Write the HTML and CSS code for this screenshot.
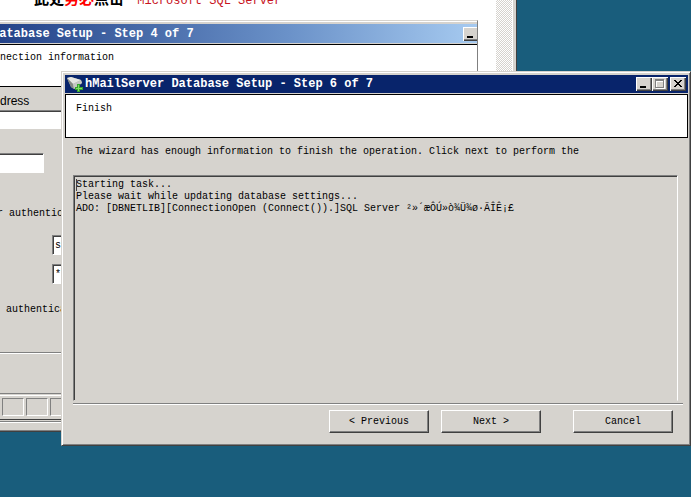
FILE: index.html
```
<!DOCTYPE html>
<html lang="en">
<head>
<meta charset="UTF-8" />
<meta name="viewport" content="width=device-width, initial-scale=1" />
<title>hMailServer Database Setup</title>
<link rel="stylesheet" href="styles.css">
</head>
<body>

<main class="desktop">

  <!-- Document viewer behind the dialog -->
  <section class="viewer">
    <div class="viewer-body">
      <div class="page">
        <p class="note"><b>此处<em>务必</em>点击</b> <span>Microsoft SQL Server</span></p>
        <div class="shot">
          <div class="shot-title">
            <h2>Database Setup - Step 4 of 7</h2>
            <button class="win-btn" aria-label="Minimize"><svg viewBox="0 0 16 14"><path d="M4 9h6v2H4z" /></svg></button>
          </div>
          <div class="shot-header">nection information</div>
          <label class="address" for="address">dress</label>
          <input class="address-field" id="address" type="text" />
          <form class="login">
            <input class="server" type="text" aria-label="Server address" />
            <p>r authentication</p>
            <input class="account" type="text" value="sa" aria-label="User name" />
            <input class="account" type="text" value="****" aria-label="Password" />
            <p>authentication</p>
          </form>
          <hr />
        </div>
      </div>
      <div class="scrollbar"></div>
    </div>
    <div class="status">
      <span></span><span></span><span></span>
    </div>
    <div class="viewer-edge"></div>
  </section>

  <!-- Setup wizard -->
  <section class="dialog">
    <header class="titlebar">
      <svg class="app-icon" viewBox="0 0 16 16">
        <path d="M0 2L4 1L14 4L15 7L7 13L4 11Z" fill="#a9aba8" />
        <path d="M0 2L4 1L14 4L6 8Z" fill="#e4e5e2" />
        <path d="M0 2L6 8L7 13L4 11Z" fill="#858985" />
        <path d="M6 8L14 4L15 7L7 13Z" fill="#c5c7c3" />
        <path d="M10 8h3v3h3v3h-3v2h-3v-2H8v-3h2z" fill="#35a52d" />
        <path d="M11 9h1v3h3v1h-3v2h-1v-2H9v-1h2z" fill="#80dc63" />
      </svg>
      <h1>hMailServer Database Setup - Step 6 of 7</h1>
      <div class="win-btns">
        <button class="win-btn" aria-label="Minimize"><svg viewBox="0 0 16 14"><path d="M4 9h6v2H4z" /></svg></button>
        <button class="win-btn" aria-label="Maximize" disabled><svg viewBox="0 0 16 14"><path d="M4 3h9v9H4zM5 5v6h7V5z" fill="#fff" fill-rule="evenodd" /><path d="M3 2h9v9H3zM4 4v6h7V4z" fill="#808080" fill-rule="evenodd" /></svg></button>
        <button class="win-btn close" aria-label="Close"><svg viewBox="0 0 16 14"><path d="M4 3h2v1h1v1h2V4h1V3h2v1h-1v1h-1v1H9v1h1v1h1v1h1v1h-2V9H9V8H7v1H6v1H4V9h1V8h1V7h1V6H6V5H5V4H4z" /></svg></button>
      </div>
    </header>

    <div class="step">Finish</div>

    <div class="content">
      <label for="log">The wizard has enough information to finish the operation. Click next to perform the</label>
      <div class="log-box">
        <textarea id="log" readonly>Starting task...
Please wait while updating database settings...
ADO: [DBNETLIB][ConnectionOpen (Connect()).]SQL Server ²»´æÔÚ»ò¾Ü¾ø·ÃÎÊ¡£</textarea>
        <span class="caret"></span>
      </div>
      <hr />
    </div>

    <footer class="actions">
      <button>&lt; Previous</button>
      <button>Next &gt;</button>
      <button class="cancel">Cancel</button>
    </footer>
  </section>

</main>

</body>
</html>
```
FILE: styles.css
```
* {
  margin: 0; padding: 0; box-sizing: border-box;
}
html, body {
  height: 100%;
}
body, button, input, textarea {
  font-family: "Liberation Mono", "Noto Sans CJK SC", monospace;
  font-size: 10px;
  line-height: 12px;
  color: #000;
}

.desktop {
  position: relative;
  height: 100%;
  overflow: hidden;
  background: #195d7c;
  border-right: 1px solid #fff;
}

hr {
  border: none;
  border-top: 1px solid #808080;
  border-bottom: 1px solid #fff;
}

/* Document viewer */
.viewer {
  position: absolute;
  left: 0; top: 0;
  width: 517px;
  background: #d6d3ce;
  border-right: 1px solid #404040;
  border-bottom: 1px solid #404040;
}
.viewer-body {
  display: flex;
  height: 393px;
  padding-right: 3px;
}
.page {
  flex: 1;
  background: #fff;
  padding-right: 18px;
}
.note {
  height: 23px;
  margin-top: -3px;
  overflow: hidden;
  padding-left: 34px;
  font-size: 12px;
  line-height: 2px;
  white-space: nowrap;
}
.note b {
  font-family: "Noto Sans CJK SC", sans-serif;
  font-size: 15px;
  margin-right: 6px;
}
.note em {
  font-style: normal;
  color: #f00;
}
.note span {
  color: #c8141e;
}
.scrollbar {
  width: 17px;
  background: repeating-conic-gradient(#d6d3ce 0 25%, #fff 0 50%) 0 0 / 2px 2px;
  border-right: 1px solid #fff;
}

.shot {
  height: 373px;
  display: flex;
  flex-direction: column;
  background: #d6d3ce;
  border-top: 1px solid #d6d3ce;
  border-right: 1px solid #808080;
}
.shot-title {
  display: flex;
  align-items: center;
  justify-content: space-between;
  height: 23px;
  border-top: 1px solid #fff;
  border-bottom: 1px solid #d6d3ce;
  background: linear-gradient(to right, #244389, #6a91c8 60%, #a6caf0);
  box-shadow: inset 0 2px #d6d3ce;
  padding-top: 2px;
  overflow: hidden;
}
.shot-title h2 {
  font-size: 12px;
  line-height: 18px;
  color: #fff;
  margin-left: -8px;
}
.shot-title .win-btn {
  margin-right: -2px;
}
.shot-header {
  height: 43px;
  padding-top: 7px;
  background: #fff;
  border-top: 1px solid #000;
  border-bottom: 1px solid #000;
}
.address {
  font-family: "Liberation Sans", sans-serif;
  font-size: 12px;
  line-height: 28px;
  height: 23px;
}
input {
  background: #fff;
  border: 1px solid #fff;
  border-top-color: #808080;
  border-left-color: #808080;
  box-shadow: inset 1px 1px #404040;
}
.address-field {
  width: 100%;
  height: 19px;
  border-left: none;
  box-shadow: inset 0 1px #404040;
}
.login {
  flex: 1;
  padding-top: 24px;
}
.login input {
  display: block;
}
.login p {
  margin-left: 6px;
}
.login .server {
  width: 44px;
  height: 20px;
  border-left: none;
  box-shadow: inset 0 1px #404040;
}
.server + p {
  margin-top: 35px;
  margin-bottom: 15px;
  margin-left: -3px;
}
.login .account {
  width: 160px;
  height: 20px;
  margin-left: 52px;
  margin-bottom: 9px;
  padding-left: 2px;
}
.account + p {
  margin-top: 20px;
}
.shot hr {
  margin-bottom: 39px;
}

/* Status bar */
.status {
  display: flex;
  gap: 2px;
  height: 26px;
  padding: 3px 2px;
  border-top: 1px solid #808080;
  box-shadow: inset 0 1px #d6d3ce, inset 0 2px #fff;
}
.status span {
  width: 22px;
  height: 18px;
  margin-top: 1px;
  border: 1px solid #fff;
  border-top-color: #808080;
  border-left-color: #808080;
}
.viewer-edge {
  height: 12px;
  border-top: 1px solid #404040;
  border-bottom: 1px solid #808080;
  background: linear-gradient(#d6d3ce 1px, #808080 1px 2px, #fff 2px 3px, #d6d3ce 3px);
}

/* Wizard dialog */
.dialog {
  position: absolute;
  left: 61px; right: 0; top: 71px;
  padding: 2px;
  background: #d6d3ce;
  border: 1px solid #404040;
  border-top-color: #d6d3ce;
  border-left-color: #d6d3ce;
  box-shadow: inset 1px 1px #fff, inset -1px -1px #808080;
}
.titlebar {
  display: flex;
  align-items: center;
  height: 18px;
  margin: 1px 0 1px 1px;
  padding: 0 2px;
  background: #08246b;
}
.titlebar h1 {
  flex: 1;
  font-size: 12px;
  line-height: 18px;
  color: #fff;
  margin-left: 2px;
}
.app-icon {
  width: 16px;
  height: 16px;
}
.win-btns {
  display: flex;
}
.win-btn {
  width: 16px;
  height: 14px;
  background: #d6d3ce;
  border: none;
  box-shadow: inset 1px 1px #fff, inset -1px -1px #404040, inset -2px -2px #808080;
}
.win-btn svg {
  display: block;
  width: 16px;
  height: 14px;
}
.win-btn.close {
  margin-left: 2px;
}
.step {
  height: 44px;
  margin-left: 1px;
  padding: 8px 10px;
  background: #fff;
  border: 1px solid #000;
}
.content {
  padding: 8px 5px 0 9px;
}
.content label {
  display: block;
  padding-left: 2px;
}
.log-box {
  position: relative;
  margin: 17px 5px 2px 0;
}
.log-box textarea {
  display: block;
  width: 100%;
  height: 226px;
  padding: 3px 2px;
  resize: none;
  overflow: hidden;
  background: #d6d3ce;
  border: 1px solid #fff;
  border-top-color: #808080;
  border-left-color: #808080;
  border-bottom-color: #d6d3ce;
  box-shadow: inset 1px 1px #404040;
  outline: none;
}
.caret {
  position: absolute;
  left: 3px; top: 4px;
  width: 1px;
  height: 12px;
  background: #404040;
}
.actions {
  display: flex;
  justify-content: flex-end;
  gap: 12px;
  padding: 5px 15px 10px;
}
.actions button {
  width: 100px;
  height: 23px;
  background: #d6d3ce;
  border: 1px solid #404040;
  border-top-color: #fff;
  border-left-color: #fff;
  box-shadow: inset -1px -1px #808080;
}
.actions .cancel {
  margin-left: 20px;
}
```
